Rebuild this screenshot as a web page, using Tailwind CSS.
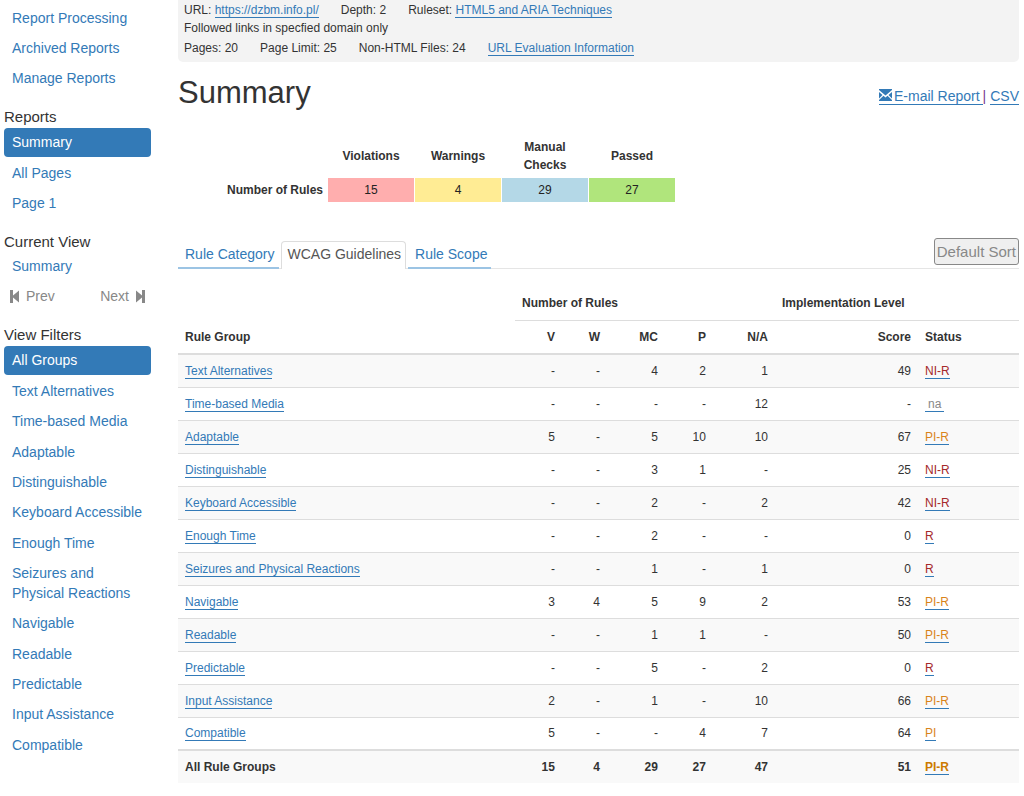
<!DOCTYPE html>
<html lang="en">
<head>
<meta charset="utf-8">
<meta name="viewport" content="width=device-width, initial-scale=1">
<title>Summary</title>
<script src="https://cdn.jsdelivr.net/npm/@tailwindcss/browser@4"></script>
</head>
<body class="bg-white font-['Liberation_Sans',Arial,sans-serif] text-[#333]">
<div class="flex items-start pl-1 pr-[5px]">

<nav aria-label="Reports and filters" class="w-[147px] shrink-0 pt-[3px] text-sm leading-5 text-[#337ab7]">
  <ul class="[&_a]:block [&_a]:px-2 [&_a]:py-[5px]">
    <li><a href="#">Report Processing</a></li>
    <li><a href="#">Archived Reports</a></li>
    <li><a href="#">Manage Reports</a></li>
  </ul>
  <h2 class="mt-[14px] text-[15px] leading-5 text-[#333]">Reports</h2>
  <ul class="[&_a]:block [&_a]:px-2 [&_a]:py-[5px]">
    <li><a href="#" aria-current="page" class="mt-px rounded bg-[#337ab7] pt-1! text-white">Summary</a></li>
    <li class="pt-px"><a href="#">All Pages</a></li>
    <li><a href="#">Page 1</a></li>
  </ul>
  <h2 class="mt-[14px] text-[15px] leading-5 text-[#333]">Current View</h2>
  <ul>
    <li><a href="#" class="block px-2 pb-[5px] pt-1">Summary</a></li>
  </ul>
  <div class="flex justify-between px-[6px] py-[5px] text-[#888]">
    <button type="button" disabled class="flex items-center gap-[6px]">
      <svg class="h-[13px] w-[10px]" viewBox="0 0 10 13" fill="currentColor" aria-hidden="true"><path d="M0 0h3v5.500L9 .5v12L3 7.500V13H0z"/></svg>Prev
    </button>
    <button type="button" disabled class="flex items-center gap-[6px]">Next
      <svg class="h-[13px] w-[10px]" viewBox="0 0 10 13" fill="currentColor" aria-hidden="true"><path d="M10 0H7v5.500L1 .5v12l6-5V13h3z"/></svg>
    </button>
  </div>
  <h2 class="mt-[14px] text-[15px] leading-5 text-[#333]">View Filters</h2>
  <ul class="[&_a]:block [&_a]:px-2 [&_a]:py-[5px] [&_li:nth-child(3n)]:pb-px">
    <li><a href="#" aria-current="true" class="mt-px rounded bg-[#337ab7] pt-1! text-white">All Groups</a></li>
    <li class="pt-px"><a href="#">Text Alternatives</a></li>
    <li><a href="#">Time-based Media</a></li>
    <li><a href="#">Adaptable</a></li>
    <li><a href="#">Distinguishable</a></li>
    <li><a href="#">Keyboard Accessible</a></li>
    <li><a href="#">Enough Time</a></li>
    <li><a href="#">Seizures and Physical Reactions</a></li>
    <li><a href="#">Navigable</a></li>
    <li><a href="#">Readable</a></li>
    <li><a href="#">Predictable</a></li>
    <li><a href="#">Input Assistance</a></li>
    <li><a href="#">Compatible</a></li>
  </ul>
</nav>

<main class="ml-[27px] min-w-0 grow">
  <section aria-label="Report details" class="rounded-b-[5px] bg-[#f3f3f3] px-[6px] pb-[5px] pt-px text-xs leading-[18px] [&_a]:border-b [&_a]:border-[#337ab7] [&_a]:text-[#337ab7]">
    <div class="flex gap-[22px]">
      <span>URL: <a href="#">https://dzbm.info.pl/</a></span>
      <span>Depth: 2</span>
      <span>Ruleset: <a href="#">HTML5 and ARIA Techniques</a></span>
    </div>
    <p>Followed links in specfied domain only</p>
    <div class="mt-[2px] flex gap-[22px]">
      <span>Pages: 20</span>
      <span>Page Limit: 25</span>
      <span>Non-HTML Files: 24</span>
      <span><a href="#">URL Evaluation Information</a></span>
    </div>
  </section>

  <header class="mt-[13px] flex items-center justify-between">
    <h1 class="text-[31px] leading-9">Summary</h1>
    <div class="mt-[6px] flex gap-1 text-sm leading-4 text-[#337ab7]">
      <a href="#" class="flex items-center gap-[2px] border-b border-[#337ab7] pr-[3px]">
        <svg class="mb-[2px] h-3 w-[13px]" viewBox="0 0 13 12" fill="currentColor" aria-hidden="true"><path d="M0 0h13v1L6.500 6.500 0 1zM0 3l3.500 3L0 9.500zM13 3L9.500 6 13 9.500zM4.500 6.800l2 1.700 2-1.700L13 11v1H0v-1z"/></svg>E-mail Report</a><span class="-ml-1 text-[#7a3b8f]">|</span>
      <a href="#" class="border-b border-[#337ab7]">CSV</a>
    </div>
  </header>

  <table class="ml-10 mt-[26px] border-separate border-spacing-x-px border-spacing-y-0 text-center text-xs leading-[18px]">
    <thead>
      <tr class="h-[41px] [&_th]:pb-[3px]">
        <td class="w-[108px]"></td>
        <th scope="col" class="w-[86px]">Violations</th>
        <th scope="col" class="w-[86px]">Warnings</th>
        <th scope="col" class="w-[86px] px-5">Manual Checks</th>
        <th scope="col" class="w-[86px]">Passed</th>
      </tr>
    </thead>
    <tbody>
      <tr class="h-6 text-[#222]">
        <th scope="row" class="whitespace-nowrap pr-1 text-right text-[#333]">Number of Rules</th>
        <td class="bg-[#ffaeae]">15</td>
        <td class="bg-[#ffec94]">4</td>
        <td class="bg-[#b4d8e7]">29</td>
        <td class="bg-[#b0e57c]">27</td>
      </tr>
    </tbody>
  </table>

  <div class="mt-9 flex items-end border-b border-[#e5e5e5] text-sm leading-5">
    <div role="tablist" aria-label="Rule grouping" class="-mb-px flex grow items-end gap-[2px]">
      <button type="button" role="tab" aria-selected="false" class="h-7 border-b-2 border-[#9cc4e4] pl-[7px] pr-1 text-[#337ab7]">Rule Category</button>
      <button type="button" role="tab" aria-selected="true" class="h-7 rounded-t border border-b-0 border-[#ddd] bg-white pb-[3px] pl-[6px] pr-1 text-[#555]">WCAG Guidelines</button>
      <button type="button" role="tab" aria-selected="false" class="h-7 border-b-2 border-[#9cc4e4] pl-[7px] pr-1 text-[#337ab7]">Rule Scope</button>
    </div>
    <button type="button" disabled class="mb-[3px] h-[27px] rounded-[3px] border border-[#888] bg-[#efefef] px-[2px] text-[15px] text-[#888]">Default Sort</button>
  </div>

  <table class="mt-[18px] w-full table-fixed border-collapse text-right text-xs leading-[18px] [&_a]:border-b [&_a]:border-[#337ab7] [&_td]:px-[7px] [&_th]:px-[7px] [&_tr]:h-[33px]">
    <colgroup>
      <col><col class="w-[47px]"><col class="w-[45px]"><col class="w-[58px]"><col class="w-[48px]"><col class="w-[62px]"><col class="w-[143px]"><col class="w-[101px]">
    </colgroup>
    <thead>
      <tr class="text-left">
        <td></td>
        <th scope="colgroup" colspan="5" class="border-b border-[#ddd]">Number of Rules</th>
        <th scope="colgroup" colspan="2" class="border-b border-[#ddd]">Implementation Level</th>
      </tr>
      <tr class="h-[34px]! border-b-2 border-[#ddd]">
        <th scope="col" class="text-left">Rule Group</th>
        <th scope="col">V</th><th scope="col">W</th><th scope="col">MC</th><th scope="col">P</th><th scope="col">N/A</th>
        <th scope="col">Score</th>
        <th scope="col" class="text-left">Status</th>
      </tr>
    </thead>
    <tbody class="[&_td:last-child]:text-left [&_th]:text-left [&_th]:font-normal [&_th]:text-[#337ab7] [&_tr]:border-t [&_tr]:border-[#ddd] [&_tr:nth-child(odd)]:bg-[#f9f9f9]">
      <tr><th scope="row"><a href="#">Text Alternatives</a></th><td>-</td><td>-</td><td>4</td><td>2</td><td>1</td><td>49</td><td><a href="#" class="text-[#a52a2a]">NI-R</a></td></tr>
      <tr><th scope="row"><a href="#">Time-based Media</a></th><td>-</td><td>-</td><td>-</td><td>-</td><td>12</td><td>-</td><td><a href="#" class="px-[3px] text-[#888]">na</a></td></tr>
      <tr><th scope="row"><a href="#">Adaptable</a></th><td>5</td><td>-</td><td>5</td><td>10</td><td>10</td><td>67</td><td><a href="#" class="text-[#d9841a]">PI-R</a></td></tr>
      <tr><th scope="row"><a href="#">Distinguishable</a></th><td>-</td><td>-</td><td>3</td><td>1</td><td>-</td><td>25</td><td><a href="#" class="text-[#a52a2a]">NI-R</a></td></tr>
      <tr><th scope="row"><a href="#">Keyboard Accessible</a></th><td>-</td><td>-</td><td>2</td><td>-</td><td>2</td><td>42</td><td><a href="#" class="text-[#a52a2a]">NI-R</a></td></tr>
      <tr><th scope="row"><a href="#">Enough Time</a></th><td>-</td><td>-</td><td>2</td><td>-</td><td>-</td><td>0</td><td><a href="#" class="text-[#a52a2a]">R</a></td></tr>
      <tr><th scope="row"><a href="#">Seizures and Physical Reactions</a></th><td>-</td><td>-</td><td>1</td><td>-</td><td>1</td><td>0</td><td><a href="#" class="text-[#a52a2a]">R</a></td></tr>
      <tr><th scope="row"><a href="#">Navigable</a></th><td>3</td><td>4</td><td>5</td><td>9</td><td>2</td><td>53</td><td><a href="#" class="text-[#d9841a]">PI-R</a></td></tr>
      <tr><th scope="row"><a href="#">Readable</a></th><td>-</td><td>-</td><td>1</td><td>1</td><td>-</td><td>50</td><td><a href="#" class="text-[#d9841a]">PI-R</a></td></tr>
      <tr><th scope="row"><a href="#">Predictable</a></th><td>-</td><td>-</td><td>5</td><td>-</td><td>2</td><td>0</td><td><a href="#" class="text-[#a52a2a]">R</a></td></tr>
      <tr><th scope="row"><a href="#">Input Assistance</a></th><td>2</td><td>-</td><td>1</td><td>-</td><td>10</td><td>66</td><td><a href="#" class="text-[#d9841a]">PI-R</a></td></tr>
      <tr><th scope="row"><a href="#">Compatible</a></th><td>5</td><td>-</td><td>-</td><td>4</td><td>7</td><td>64</td><td><a href="#" class="text-[#d9841a]">PI</a></td></tr>
    </tbody>
    <tfoot>
      <tr class="border-t-2 border-[#ddd] bg-[#f9f9f9] font-bold"><th scope="row" class="text-left">All Rule Groups</th><td>15</td><td>4</td><td>29</td><td>27</td><td>47</td><td>51</td><td class="text-left"><a href="#" class="text-[#cc7a00]">PI-R</a></td></tr>
    </tfoot>
  </table>
</main>
</div>
</body>
</html>
